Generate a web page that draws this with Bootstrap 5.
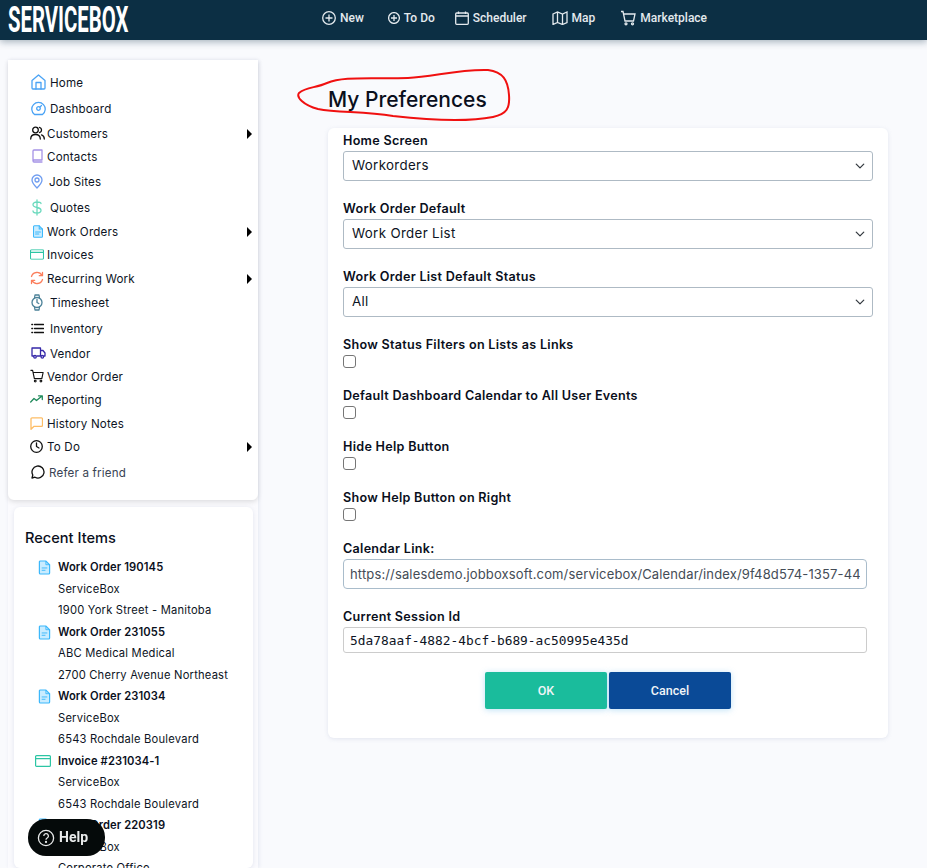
<!DOCTYPE html>
<html lang="en">
<head>
<meta charset="utf-8">
<title>My Preferences</title>
<link href="https://cdn.jsdelivr.net/npm/bootstrap@5.3.0/dist/css/bootstrap.min.css" rel="stylesheet">
<style>
html,body{height:868px;overflow:hidden}
body{background:#f9fafd;font-family:Inter,"Liberation Sans",sans-serif;color:#0d1424;font-size:12px}
.topbar{height:40px;background:#0c2f44;box-shadow:0 2px 7px rgba(12,47,68,.35);padding:0 0 0 8px;position:relative;z-index:3;flex-wrap:nowrap;justify-content:flex-start}
.logo-box{width:120px;height:40px;overflow:visible;flex:none}
.logo-text{display:block;font:700 36px/40px Roboto,sans-serif;color:#fff;transform:scaleX(.565);transform-origin:left center;white-space:nowrap}
.top-links{margin-left:194px;margin-bottom:4px;gap:23px;font:500 12px/16px Roboto,sans-serif;color:#e4eaee}
.top-link{display:flex;align-items:center;gap:4px;color:#e4eaee;text-decoration:none}
.top-link svg{fill:none;stroke:#e4eaee;stroke-width:1.3}
.gap-n{margin-left:1px}
.gap-s{margin-left:-3px}
.gap-w{margin-left:2px}
.page{height:828px;overflow:hidden}
.side{width:250px;margin-left:8px;box-shadow:1px 0 4px rgba(160,170,200,.22);background:#fbfbfe;flex:none;margin-top:20px}
.menu-box{height:440px;padding-top:11px;background:#fff;border-radius:0 0 6px 6px;box-shadow:0 2px 5px rgba(0,0,0,.12)}
.m-row{display:flex;align-items:flex-start;padding-left:23px;padding-right:6px;line-height:24px;color:#0d1424;text-decoration:none;font-size:11.6px;letter-spacing:.18px}
.m-row svg{flex:none;fill:none;stroke-width:1.3;stroke-linecap:round;stroke-linejoin:round}
.r23{height:23px}.r24{height:24px}.r25{height:25px}.r26{height:26px}
.ic17{width:17px;margin-left:-1px}.ic19{width:18px}.ic20{width:19px}
.ic-nudge{padding-left:2px}
.ic-wrap{display:flex;align-items:center;height:22px;flex:none}
.tri{width:0;height:0;border-left:5px solid #000;border-top:5px solid transparent;border-bottom:5px solid transparent;margin-left:auto;margin-top:7px;margin-right:0}
.muted-row{color:#3a4454}
.recent-box{background:#fff;border-radius:6px;box-shadow:0 1px 5px rgba(150,160,190,.25);margin:7px 5px 0 6px;padding:22px 11px 0 11px;height:361px;overflow:hidden}
.recent-title{font-size:14.6px;font-weight:500;line-height:18px;margin-bottom:10px;color:#0a0f1c}
.r-row{display:flex;height:21.5px;line-height:21.5px;font-size:11.2px;letter-spacing:.2px;white-space:nowrap}
.r-ic{width:33px;flex:none;display:flex;justify-content:flex-end;padding-right:7px;align-items:center}
.r-bold{font-weight:600;color:#0a0f1c;letter-spacing:.1px}
.main-area{margin-left:70px;position:relative;width:560px}
.page-title{font-size:21px;font-weight:500;line-height:26px;margin:47px 0 15px;color:#0a0f1c}
.pref-card{height:610px;border:0;border-radius:6px;background:#fff;box-shadow:0 1px 4px rgba(150,160,190,.22);padding:3px 15px 0}
.fld{margin-bottom:18px}
.fld .form-label{display:block;font-size:12.6px;font-weight:600;line-height:20px;margin:0;letter-spacing:.28px;color:#0a0f1c}
.pref-sel{height:30px;padding:0 30px 0 8px;font-size:13.3px;letter-spacing:.35px;font-family:inherit;color:#0d1424;border-color:#aebac4;border-radius:3px;background-position:right 6px center;background-size:12px 10px}
.pref-check{display:block;width:13px;height:13px;margin:0;border-color:#767676;border-radius:2px}
.pref-link{width:524px;height:30px;padding:0 6px;font-size:13px;letter-spacing:.14px;color:#444c56;border:1px solid #a9bccb;border-radius:4px;font-family:inherit}
.pref-mono{width:524px;height:26px;padding:0 6px;font:12.85px "DejaVu Sans Mono",monospace;color:#0d1424;border-color:#ccc;border-radius:3px}
.btn-pair{gap:2px;margin-top:1px}
.act-btn{width:122px;height:37px;border:0;border-radius:2px;font:500 12.5px Roboto,sans-serif;color:#f0f5f8;box-shadow:0 1px 6px rgba(70,170,230,.35)}
.ok-btn{background:#1abc9c}
.ok-btn:hover{background:#1abc9c;color:#fff}
.cancel-btn{background:#0a4a97}
.cancel-btn:hover{background:#0a4a97;color:#fff}
.scribble{position:absolute;left:-30px;top:30px;width:230px;height:60px;overflow:visible;pointer-events:none}
.help-pill{position:fixed;left:28px;top:819px;width:77px;height:37px;background:#050a0a;border-radius:18px;color:#e8eaea;font:700 14px/37px Roboto,sans-serif;display:flex;align-items:center;gap:4px;padding-left:9px;z-index:5}
</style>
</head>
<body>
<svg width="0" height="0" class="position-absolute">
<symbol id="doc" viewBox="0 0 14 16"><path d="M2.5 1h6L12.5 5v9a1 1 0 0 1-1 1h-9a1 1 0 0 1-1-1V2a1 1 0 0 1 1-1z" fill="#c9ecff" stroke="#3db8fb" stroke-width="1.3"/><path d="M8.5 1v4h4" fill="none" stroke="#3db8fb"/><path d="M4 8.5h6M4 11h4" stroke="#3db8fb" fill="none"/></symbol>
<symbol id="card" viewBox="0 0 16 12"><rect x=".6" y=".6" width="14.8" height="10.8" rx="1" fill="#fff" stroke="#2cc5a4" stroke-width="1.2"/><path d="M.6 3.6h14.8" stroke="#2cc5a4" stroke-width="1.4"/></symbol>
<symbol id="cart" viewBox="0 0 16 16"><path d="M1 1.5h2l2 9.5h8.5l1.5-7H4"/><circle cx="6" cy="13.8" r="1"/><circle cx="12.5" cy="13.8" r="1"/></symbol>
</svg>
<nav class="navbar topbar">
  <div class="logo-box"><span class="logo-text">SERVICEBOX</span></div>
  <div class="d-flex top-links">
    <a class="top-link"><svg width="14" height="14" viewBox="0 0 14 14"><circle cx="7" cy="7" r="6.3"/><path d="M7 3.500v7M3.500 7h7"/></svg>New</a>
    <a class="top-link gap-n"><svg width="12" height="12" viewBox="0 0 12 12"><circle cx="6" cy="6" r="5.400"/><path d="M6 3v6M3 6h6"/></svg>To Do</a>
    <a class="top-link gap-s"><svg width="14" height="14" viewBox="0 0 14 14"><rect x=".7" y="2" width="12.600" height="11.300" rx="1"/><path d="M.7 5h12.600M3.500 .5v2.500M10.500 .5v2.500"/></svg>Scheduler</a>
    <a class="top-link gap-w"><svg width="16" height="14" viewBox="0 0 16 14"><path d="M1 3l4.500-2 5 2 4.500-2v10.500l-4.500 2-5-2-4.500 2zM5.500 1v10.500M10.500 3v10.500"/></svg>Map</a>
    <a class="top-link gap-w"><svg width="16" height="16" viewBox="0 0 16 16"><use href="#cart"/></svg>Marketplace</a>
  </div>
</nav>
<div class="d-flex page">
  <aside class="side">
    <div class="menu-box">
      <a class="m-row r26"><span class="ic-wrap ic20"><svg width="15" height="16" viewBox="0 0 15 16" stroke="#4aa3f5"><path d="M1 6.500 7.500 1 14 6.500V14a1 1 0 0 1-1 1H2a1 1 0 0 1-1-1z"/><path d="M5 15V8.500h5V15"/></svg></span>Home</a>
      <a class="m-row r25"><span class="ic-wrap ic20"><svg width="15" height="15" viewBox="0 0 15 15" stroke="#4aa3f5"><path d="M3.500 13.500a6.700 6.700 0 1 1 8 0z"/><circle cx="7.500" cy="7.500" r="1.800"/><path d="M9 6l1.500-1.500"/></svg></span>Dashboard</a>
      <a class="m-row r23"><span class="ic-wrap ic17"><svg width="15" height="14" viewBox="0 0 15 14" stroke="#111"><circle cx="5.500" cy="4" r="2.800"/><path d="M.7 13c0-3 1.500-4.500 4.800-4.500s4.800 1.500 4.800 4.500M9.500 1.300a2.800 2.800 0 0 1 0 5.400M11.500 8.800c1.800.5 2.800 2 2.800 4.200"/></svg></span>Customers<span class="tri"></span></a>
      <a class="m-row r25"><span class="ic-wrap ic17 ic-nudge"><svg width="11" height="14" viewBox="0 0 11 14" stroke="#a593e6"><path d="M1 12V2a1 1 0 0 1 1-1h8v10H2a1 1 0 0 0-1 1 1 1 0 0 0 1 1h8"/></svg></span>Contacts</a>
      <a class="m-row r26"><span class="ic-wrap ic19"><svg width="12" height="15" viewBox="0 0 12 15" stroke="#6f9df0"><path d="M6 14C3 11 1 8.500 1 6a5 5 0 0 1 10 0c0 2.500-2 5-5 8z"/><circle cx="6" cy="6" r="2"/></svg></span>Job Sites</a>
      <a class="m-row r24"><span class="ic-wrap ic20"><svg width="12" height="17" viewBox="0 0 12 17" stroke="#6ad9bd"><path d="M6 1v15M10 4.500C10 3.200 8.500 3 6 3S2 4 2 5.800 3.500 8 6 8.500 10 9.500 10 11.300 8.500 14 6 14 2 13.500 2 12"/></svg></span>Quotes</a>
      <a class="m-row r23"><span class="ic-wrap ic17 ic-nudge"><svg width="12" height="13" viewBox="0 0 14 16"><use href="#doc"/></svg></span>Work Orders<span class="tri"></span></a>
      <a class="m-row r24"><span class="ic-wrap ic17"><svg width="14" height="11" viewBox="0 0 16 12"><use href="#card"/></svg></span>Invoices</a>
      <a class="m-row r24"><span class="ic-wrap ic17"><svg width="14" height="14" viewBox="0 0 14 14" stroke="#fb7d5b"><path d="M1.500 5.500A5.700 5.700 0 0 1 12 4.500M12.500 1.500V4.700H9.300M12.500 8.500A5.700 5.700 0 0 1 2 9.500M1.500 12.500V9.300H4.700"/></svg></span>Recurring Work<span class="tri"></span></a>
      <a class="m-row r26"><span class="ic-wrap ic20"><svg width="12" height="17" viewBox="0 0 12 17" stroke="#4b8198"><circle cx="6" cy="8.500" r="5"/><path d="M6 5.500v3l1.800 1M3.500 4l.5-3h4l.5 3M3.500 13l.5 3h4l.5-3"/></svg></span>Timesheet</a>
      <a class="m-row r25"><span class="ic-wrap ic20"><svg width="13" height="11" viewBox="0 0 13 11" stroke="#111"><path d="M3.500 1.500H12.500M3.500 5.500H12.500M3.500 9.500H12.500M.8 1.500h.8M.8 5.500h.8M.8 9.500h.8"/></svg></span>Inventory</a>
      <a class="m-row r23"><span class="ic-wrap ic20"><svg width="15" height="12" viewBox="0 0 15 12" stroke="#3528a8"><path d="M2.500 9H1V1h8.500v8H6M9.500 3.500H12l2 2.500v3h-1"/><circle cx="4" cy="9.800" r="1.300"/><circle cx="11.300" cy="9.800" r="1.300"/></svg></span>Vendor</a>
      <a class="m-row r23"><span class="ic-wrap ic17"><svg width="14" height="14" viewBox="0 0 16 16" stroke="#111"><use href="#cart"/></svg></span>Vendor Order</a>
      <a class="m-row r24"><span class="ic-wrap ic17"><svg width="13" height="8" viewBox="0 0 13 8" stroke="#1f8a5b"><path d="M.7 7 4 3.500l2.500 2L12 1M8.500 .8H12.300V4.500"/></svg></span>Reporting</a>
      <a class="m-row r23"><span class="ic-wrap ic17"><svg width="13" height="13" viewBox="0 0 13 13" stroke="#fdbd66"><path d="M2 .8h9.500a1 1 0 0 1 1 1v6.500a1 1 0 0 1-1 1H4l-3 3V1.800a1 1 0 0 1 1-1z"/></svg></span>History Notes</a>
      <a class="m-row r26"><span class="ic-wrap ic17"><svg width="13" height="13" viewBox="0 0 13 13" stroke="#111"><circle cx="6.500" cy="6.500" r="5.800"/><path d="M6.500 3v3.500l2.500 1.500"/></svg></span>To Do<span class="tri"></span></a>
      <a class="m-row r25 muted-row"><span class="ic-wrap ic19"><svg width="14" height="14" viewBox="0 0 14 14" stroke="#111"><path d="M1 13l.8-3A6 6 0 1 1 4 12.200z"/></svg></span>Refer a friend</a>
    </div>
    <div class="recent-box">
      <div class="recent-title">Recent Items</div>
      <div class="r-row r-bold"><span class="r-ic"><svg width="13" height="15" viewBox="0 0 14 16"><use href="#doc"/></svg></span>Work Order 190145</div>
      <div class="r-row"><span class="r-ic"></span>ServiceBox</div>
      <div class="r-row"><span class="r-ic"></span>1900 York Street - Manitoba</div>
      <div class="r-row r-bold"><span class="r-ic"><svg width="13" height="15" viewBox="0 0 14 16"><use href="#doc"/></svg></span>Work Order 231055</div>
      <div class="r-row"><span class="r-ic"></span>ABC Medical Medical</div>
      <div class="r-row"><span class="r-ic"></span>2700 Cherry Avenue Northeast</div>
      <div class="r-row r-bold"><span class="r-ic"><svg width="13" height="15" viewBox="0 0 14 16"><use href="#doc"/></svg></span>Work Order 231034</div>
      <div class="r-row"><span class="r-ic"></span>ServiceBox</div>
      <div class="r-row"><span class="r-ic"></span>6543 Rochdale Boulevard</div>
      <div class="r-row r-bold"><span class="r-ic"><svg width="16" height="12" viewBox="0 0 16 12"><use href="#card"/></svg></span>Invoice #231034-1</div>
      <div class="r-row"><span class="r-ic"></span>ServiceBox</div>
      <div class="r-row"><span class="r-ic"></span>6543 Rochdale Boulevard</div>
      <div class="r-row r-bold"><span class="r-ic"><svg width="13" height="15" viewBox="0 0 14 16"><use href="#doc"/></svg></span>Work Order 220319</div>
      <div class="r-row"><span class="r-ic"></span>ServiceBox</div>
      <div class="r-row"><span class="r-ic"></span>Corporate Office</div>
    </div>
  </aside>
  <main class="main-area">
    <svg class="scribble" viewBox="0 0 230 60" fill="none" stroke="#f01010" stroke-width="2"><path d="M29 13C45 6 70 9 110 8 135 7 160 -1 190 0 205 2 210 10 211 25 212 38 209 44 195 47 170 52 130 50 95 46 65 41 40 43 20 39 5 35-2 27 1 23 8 17 18 18 29 13Z"/></svg>
    <h1 class="page-title">My Preferences</h1>
    <form class="card pref-card">
      <div class="fld"><label class="form-label">Home Screen</label><select class="form-select pref-sel"><option>Workorders</option></select></div>
      <div class="fld"><label class="form-label">Work Order Default</label><select class="form-select pref-sel"><option>Work Order List</option></select></div>
      <div class="fld"><label class="form-label">Work Order List Default Status</label><select class="form-select pref-sel"><option>All</option></select></div>
      <div class="fld"><label class="form-label">Show Status Filters on Lists as Links</label><input type="checkbox" class="form-check-input pref-check"></div>
      <div class="fld"><label class="form-label">Default Dashboard Calendar to All User Events</label><input type="checkbox" class="form-check-input pref-check"></div>
      <div class="fld"><label class="form-label">Hide Help Button</label><input type="checkbox" class="form-check-input pref-check"></div>
      <div class="fld"><label class="form-label">Show Help Button on Right</label><input type="checkbox" class="form-check-input pref-check"></div>
      <div class="fld"><label class="form-label">Calendar Link:</label><input class="form-control pref-link" value="https://salesdemo.jobboxsoft.com/servicebox/Calendar/index/9f48d574-1357-44"></div>
      <div class="fld"><label class="form-label">Current Session Id</label><input class="form-control pref-mono" value="5da78aaf-4882-4bcf-b689-ac50995e435d"></div>
      <div class="d-flex justify-content-center btn-pair">
        <button type="button" class="btn act-btn ok-btn">OK</button>
        <button type="button" class="btn act-btn cancel-btn">Cancel</button>
      </div>
    </form>
  </main>
</div>
<div class="help-pill"><svg width="18" height="18" viewBox="0 0 18 18" fill="none" stroke="#e8eaea" stroke-width="1.3"><circle cx="9" cy="9" r="7.600"/><path d="M6.800 7a2.300 2.300 0 1 1 3.400 2c-.8.500-1.200 1-1.200 1.800"/><circle cx="9" cy="13" r=".5"/></svg>Help</div>
<script src="https://cdn.jsdelivr.net/npm/bootstrap@5.3.0/dist/js/bootstrap.bundle.min.js"></script>
</body>
</html>
